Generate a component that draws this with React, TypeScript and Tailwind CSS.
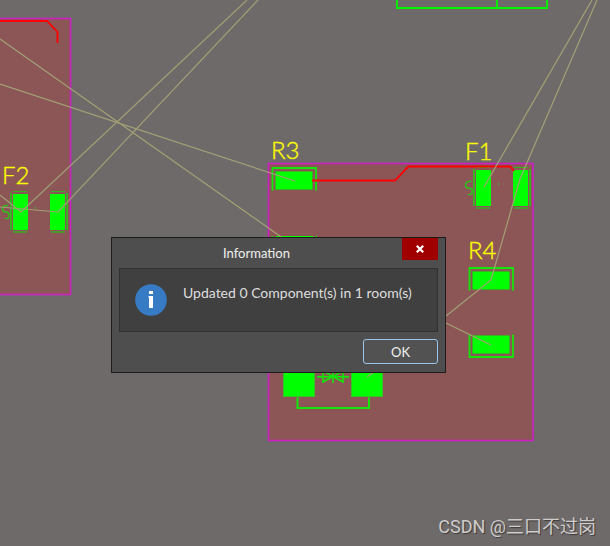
import React, { useState } from 'react';

interface Point {
  x: number;
  y: number;
}

interface Designator extends Point {
  label: string;
}

const NETS: Point[][] = [
  [{ x: 0, y: 39 }, { x: 294, y: 246 }],
  [{ x: 0, y: 84 }, { x: 295, y: 181 }],
  [{ x: 0, y: 195 }, { x: 21, y: 212 }, { x: 247, y: 0 }],
  [{ x: 0, y: 207 }, { x: 58, y: 212 }, { x: 258, y: 0 }],
  [{ x: 592, y: 0 }, { x: 484, y: 187 }],
  [{ x: 597, y: 0 }, { x: 520, y: 179 }, { x: 491, y: 280 }, { x: 446, y: 316 }],
  [{ x: 446, y: 323 }, { x: 491, y: 345 }],
  [{ x: 367, y: 377 }, { x: 374, y: 372 }],
];

const DESIGNATORS: Designator[] = [
  { label: 'F2', x: 2, y: 184 },
  { label: 'R3', x: 271, y: 159 },
  { label: 'F1', x: 465, y: 160 },
  { label: 'R4', x: 468, y: 259 },
];

const toPoints = (points: Point[]) => points.map((p) => `${p.x},${p.y}`).join(' ');

function Room({ x, y, width, height }: Point & { width: number; height: number }) {
  return <rect x={x} y={y} width={width} height={height} fill="#8b5655" stroke="#cc1fc4" strokeWidth="1.6" />;
}

// Two upright pads with the fuse mark on the left side
function Fuse({ x, y }: Point) {
  return (
    <g transform={`translate(${x} ${y})`}>
      <g fill="#00ff00">
        <rect x="3" y="3" width="15" height="36" />
        <rect x="40" y="3" width="15" height="36" />
      </g>
      <g stroke="#38b024" fill="none">
        <path d="M3 .5H17M41 .5H55" />
        <path d="M3 41H17M41 41H55" strokeWidth="1.5" />
        <path d="M1 2V39M57 2V39" strokeWidth="2" />
        <path d="M25.5 16V18" />
      </g>
      <path
        d="M-2 14.5C-5 14-7.5 15.5-7.5 18C-7.5 20.5-6 21-4.5 21C-2 21-.8 22.5-.8 24.5C-.8 26.8-2.5 28-5 27.5"
        fill="none"
        stroke="#25cc14"
        strokeWidth="1.3"
      />
    </g>
  );
}

function ResistorPad({ x, y, flipped = false }: Point & { flipped?: boolean }) {
  return (
    <g transform={`translate(${x} ${y})${flipped ? ' scale(1 -1)' : ''}`}>
      <path d="M1.5 24V1.5H45V24" fill="none" stroke="#14e60a" strokeWidth="1.8" />
      <rect x="4.5" y="5" width="37" height="18" fill="#00ff00" stroke="#38b024" strokeWidth=".8" />
    </g>
  );
}

function Diode() {
  return (
    <g>
      <g fill="#00ff00" stroke="#38c024">
        <rect x="283.5" y="350" width="31" height="46.5" />
        <rect x="351.5" y="350" width="31" height="46.5" />
      </g>
      <g fill="none" stroke="#14e60a">
        <path d="M297.5 397.5V408H369V397.5" strokeWidth="2" />
        <path d="M317 376.8H349" strokeWidth="1.8" />
        <path d="M323 370V383M333 366V383M343 370V383" strokeWidth="1.6" />
        <path d="M323 371L343 382M343 371L323 382" strokeWidth="1.5" />
      </g>
    </g>
  );
}

function Board() {
  return (
    <svg className="absolute inset-0 h-full w-full" aria-label="PCB layout">
      <Room x={-10} y={18.5} width={80.5} height={276} />
      <Room x={268.5} y={163.5} width={264.5} height={277} />

      <path d="M397 0V8H547V0M497 0V8" fill="none" stroke="#00f500" strokeWidth="1.8" />

      <Fuse x={10} y={191} />
      <Fuse x={473} y={167} />
      <ResistorPad x={271} y={166.5} />
      <ResistorPad x={271} y={260} flipped />
      <rect x="276" y="236" width="37" height="18" fill="#00ff00" />
      <ResistorPad x={468} y={266.5} />
      <ResistorPad x={468} y={358.5} flipped />
      <Diode />

      <g fill="none" stroke="#ff0000" strokeWidth="1.8">
        <path d="M0 21H47L57.5 32V43" />
        <path d="M312 180.5H395L408.5 166.5H510L514 171" />
      </g>

      <g fill="none" stroke="#a3a076" strokeWidth="1.2">
        {NETS.map((net, i) => (
          <polyline key={i} points={toPoints(net)} />
        ))}
      </g>

      <g className="font-['Lato',sans-serif] text-[24px] font-light" fill="#f9f908" stroke="#f9f908" strokeWidth=".4">
        {DESIGNATORS.map((d) => (
          <text key={d.label} x={d.x} y={d.y}>
            {d.label}
          </text>
        ))}
      </g>
    </svg>
  );
}

function InfoIcon() {
  return (
    <svg className="h-8 w-8 shrink-0" viewBox="0 0 32 32" aria-hidden="true">
      <circle cx="16" cy="16" r="15.8" fill="#377bc4" />
      <rect x="14" y="7" width="4" height="3" fill="#fff" />
      <path d="M13.5 12H18v12h-4v-10.5h-.5z" fill="#fff" />
    </svg>
  );
}

function InformationDialog({ onClose }: { onClose: () => void }) {
  return (
    <div
      role="dialog"
      aria-labelledby="dialog-title"
      className="absolute left-[111px] top-[237px] w-[335px] border border-[#1c1c1c] bg-[#4e4e4e] px-[7px] pb-2 font-['Lato',sans-serif] text-[13px] text-[#f0f0f0]"
    >
      <div className="flex h-[30px] items-start">
        <h1 id="dialog-title" className="flex-1 pr-2 pt-1.5 text-center leading-[18px]">
          Information
        </h1>
        <button
          type="button"
          aria-label="Close"
          onClick={onClose}
          className="flex h-[22px] w-9 items-center justify-center bg-[#a00000]"
        >
          <svg className="h-2 w-2" viewBox="0 0 8 8" aria-hidden="true">
            <path d="M.8.8l6.4 6.4M7.2.8L.8 7.2" stroke="#fff" strokeWidth="2.2" />
          </svg>
        </button>
      </div>

      <div className="flex h-16 items-start gap-4 border border-[#303030] bg-[#404040] px-[15px] pt-[15px]">
        <InfoIcon />
        <p className="whitespace-nowrap text-[14px] leading-[18px] text-[#dedede]">
          Updated 0 Component(s) in 1 room(s)
        </p>
      </div>

      <div className="flex justify-end pt-[7px]">
        <button
          type="button"
          onClick={onClose}
          className="h-[25px] w-[75px] rounded-[3px] border border-[#9ac4ee] bg-[#525252] leading-[18px]"
        >
          OK
        </button>
      </div>
    </div>
  );
}

export default function App() {
  const [open, setOpen] = useState(true);

  return (
    <main className="relative min-h-screen overflow-hidden bg-[#6e6a69]">
      <Board />
      {open && <InformationDialog onClose={() => setOpen(false)} />}
      <p className="absolute bottom-1.5 right-3.5 whitespace-nowrap font-['Roboto','Noto_Sans_CJK_SC',sans-serif] text-[18px] leading-[26px] text-[#cfcdcc] [text-shadow:1px_1px_1px_#3c3a3a]">
        CSDN @三口不过岗
      </p>
    </main>
  );
}
